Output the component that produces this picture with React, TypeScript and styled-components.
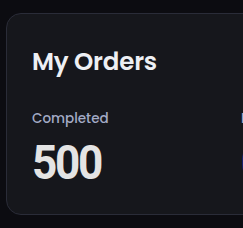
import styled, { createGlobalStyle } from "styled-components";

const GlobalStyle = createGlobalStyle`
  html, body {
    margin: 0;
    background: #0c0c11;
    overflow: hidden;
  }
`;

const Page = styled.div`
  width: 243px;
  height: 228px;
  padding: 13px 0 0 6px;
  box-sizing: border-box;
  overflow: hidden;
`;

const Card = styled.section`
  width: 420px;
  height: 202px;
  box-sizing: border-box;
  background: #16171c;
  border: 1px solid #2a2c38;
  border-radius: 15px;
  padding: 32px 25px 0;
  font-family: "Poppins", "Inter", "Open Sans", sans-serif;
`;

const Title = styled.h2`
  margin: 0;
  font-size: 24.5px;
  font-weight: 600;
  color: #eef0f4;
  line-height: 32px;
  letter-spacing: -0.2px;
`;

const Stats = styled.div`
  display: grid;
  grid-template-columns: 209px 160px;
  margin-top: 32px;
`;

const Stat = styled.div`
  display: flex;
  flex-direction: column;
`;

const Label = styled.span`
  font-size: 13.5px;
  font-weight: 500;
  color: #a3abc6;
  line-height: 18px;
`;

const Value = styled.span<{ $accent?: boolean }>`
  margin-top: 15px;
  font-family: Roboto, sans-serif;
  font-weight: 700;
  font-size: 49px;
  line-height: 40px;
  letter-spacing: -2.5px;
  color: ${(p) => (p.$accent ? "#2f7bf6" : "#e4e4e4")};
  transform: scaleX(0.9);
  transform-origin: left;
`;

export default function App() {
  return (
    <Page>
      <GlobalStyle />
      <Card>
        <Title>My Orders</Title>
        <Stats>
          <Stat>
            <Label>Completed</Label>
            <Value>500</Value>
          </Stat>
          <Stat>
            <Label>Pending</Label>
            <Value $accent>0</Value>
          </Stat>
        </Stats>
      </Card>
    </Page>
  );
}
